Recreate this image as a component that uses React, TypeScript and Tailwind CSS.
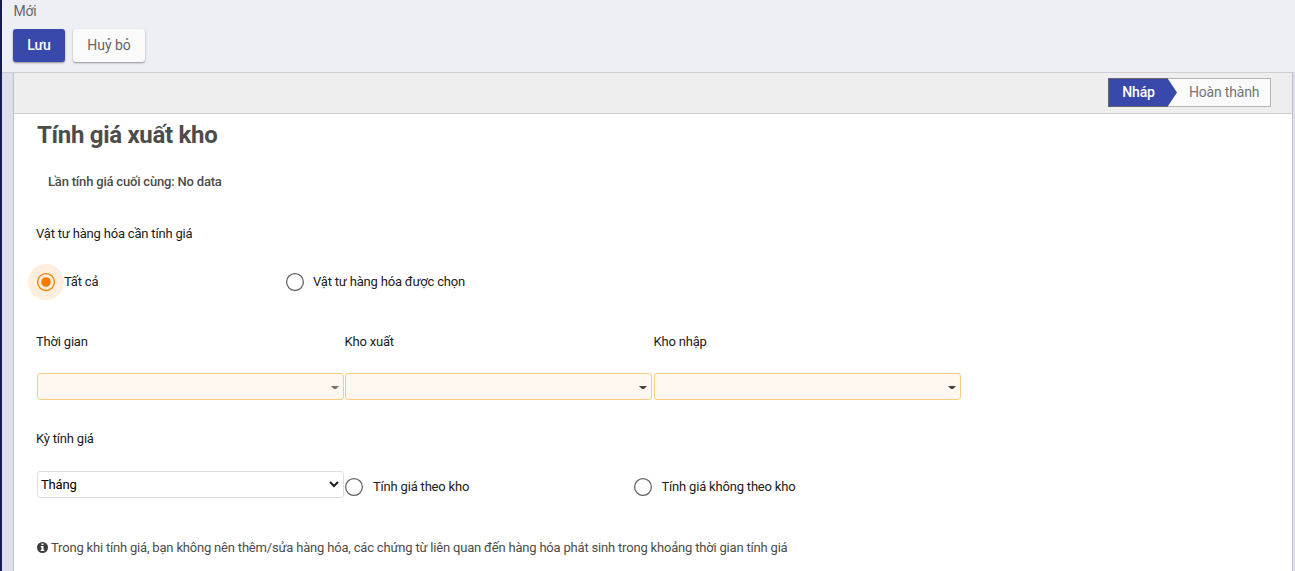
import React from "react";

function Radio({ checked = false }: { checked?: boolean }) {
  return (
    <svg width="36" height="36" viewBox="0 0 36 36" className="shrink-0" fill="none">
      {checked && <circle cx="18" cy="18" r="18" fill="#feeede" />}
      <circle cx="18" cy="18" r="8.4" stroke={checked ? "#f57c00" : "#616161"} strokeWidth="1.25" />
      {checked && <circle cx="18" cy="18" r="4.8" fill="#f57c00" />}
    </svg>
  );
}

function ManyToOne({ light = false }: { light?: boolean }) {
  return (
    <div className="flex h-[27px] w-[307px] shrink-0 items-center justify-end rounded-[3px] border border-[#ffcc80] bg-[#fff8f0] pr-1">
      <svg width="8" height="4" viewBox="0 0 8 4" className="mt-[2px]">
        <path d="M0 0h8L5 3H3z" fill={light ? "#75716b" : "#454340"} />
      </svg>
    </div>
  );
}

export default function App() {
  return (
    <div className="flex h-[571px] w-[1295px] overflow-hidden bg-[#dddfeb] font-['Roboto','Noto_Sans',sans-serif] text-[13px] tracking-[-0.19px] text-[#212121]">
      <div className="w-[2px] shrink-0 bg-[#171b54]" />
      <div className="flex flex-1 flex-col">
        <header className="h-[73px] shrink-0 border-b border-[#cfcfd3] bg-[#eeeff5] pl-[11px]">
          <div className="h-[29px] pl-[0.5px] pt-px text-[14px] leading-[21px] text-[#666]">Mới</div>
          <div className="flex gap-2 text-[14px] tracking-normal">
            <button className="h-[33px] w-[52px] rounded-[3px] bg-[#3949ab] font-medium text-white shadow-[0_1px_2px_rgba(0,0,0,0.4)]">Lưu</button>
            <button className="h-[33px] w-[72px] rounded-[3px] bg-[#fafafa] text-[#666] shadow-[0_1px_2px_rgba(0,0,0,0.4)]">Huỷ bỏ</button>
          </div>
        </header>
        <main className="ml-[11px] mr-[2px] flex flex-1 flex-col border-x border-[#bfc0c9] bg-white">
          <div className="flex h-[41px] shrink-0 justify-end border-b border-[#d0d0d4] bg-[#eeeeee] pr-[21px] pt-[5px]">
            <div className="flex h-[29px] w-[163px] border border-[#b5b5b5] bg-[#fafafa] text-[14px] leading-[27px]">
              <div className="-my-px -ml-px flex w-[60px] items-center justify-center border-y border-l border-[#666] bg-[#3949ab] font-medium text-white">Nháp</div>
              <svg width="9" height="27" viewBox="0 0 9 27" className="shrink-0">
                <path d="M0 0L9 13.5L0 27z" fill="#3949ab" />
              </svg>
              <div className="flex-1 pl-[12px] text-[#757575]">Hoàn thành</div>
            </div>
          </div>
          <div className="flex flex-col pl-[22px]">
            <h1 className="h-[42px] pl-px pt-[4px] text-[24px] font-bold leading-[34px] tracking-[-0.3px] text-[#4c4c4c]">Tính giá xuất kho</h1>
            <div className="h-[52px] pl-[12px] font-medium leading-[52px] text-[#4c4c4c]">Lần tính giá cuối cùng: No data</div>
            <div className="h-[52px] leading-[52px]">Vật tư hàng hóa cần tính giá</div>
            <div className="-ml-2 mt-1 flex h-9 items-center">
              <div className="flex w-[249px] items-center"><Radio checked /><span>Tất cả</span></div>
              <Radio /><span>Vật tư hàng hóa được chọn</span>
            </div>
            <div className="mt-[16px] flex h-[52px] leading-[52px]">
              <div className="w-[308.5px]">Thời gian</div>
              <div className="w-[309px]">Kho xuất</div>
              <div>Kho nhập</div>
            </div>
            <div className="mt-[5px] flex pl-px">
              <ManyToOne light />
              <div className="ml-px flex gap-[2px]"><ManyToOne /><ManyToOne /></div>
            </div>
            <div className="mt-[13px] h-[52px] leading-[52px]">Kỳ tính giá</div>
            <div className="mt-[4px] flex h-[36px] pl-px">
              <div className="mt-[2px] flex h-[27px] w-[307px] items-center justify-between rounded-[3px] border border-[#dedede] pl-[3px] pr-[4px] text-black">
                <span>Tháng</span>
                <svg width="10" height="7" viewBox="0 0 10 7" fill="none">
                  <path d="M1 1l4 4 4-4" stroke="#1c1c1c" strokeWidth="2" />
                </svg>
              </div>
              <div className="-ml-2 flex w-[289px] items-center"><Radio /><span className="ml-[1px]">Tính giá theo kho</span></div>
              <div className="flex items-center"><Radio /><span className="ml-[0.5px]">Tính giá không theo kho</span></div>
            </div>
            <div className="mt-[17px] flex h-[52px] items-center gap-[3px] pl-px text-[#4c4c4c]">
              <svg width="11" height="11" viewBox="0 0 11 11" className="-mt-px">
                <circle cx="5.5" cy="5.5" r="5.5" fill="#3c3c3c" />
                <path d="M4.500 1.500h2v1.500h-2zM3.700 4h2.800v3.700h.8V9H3.700V7.700h.8V5.300h-.8z" fill="white" />
              </svg>
              <span className="whitespace-nowrap">Trong khi tính giá, bạn không nên thêm/sửa hàng hóa, các chứng từ liên quan đến hàng hóa phát sinh trong khoảng thời gian tính giá</span>
            </div>
          </div>
        </main>
      </div>
    </div>
  );
}
